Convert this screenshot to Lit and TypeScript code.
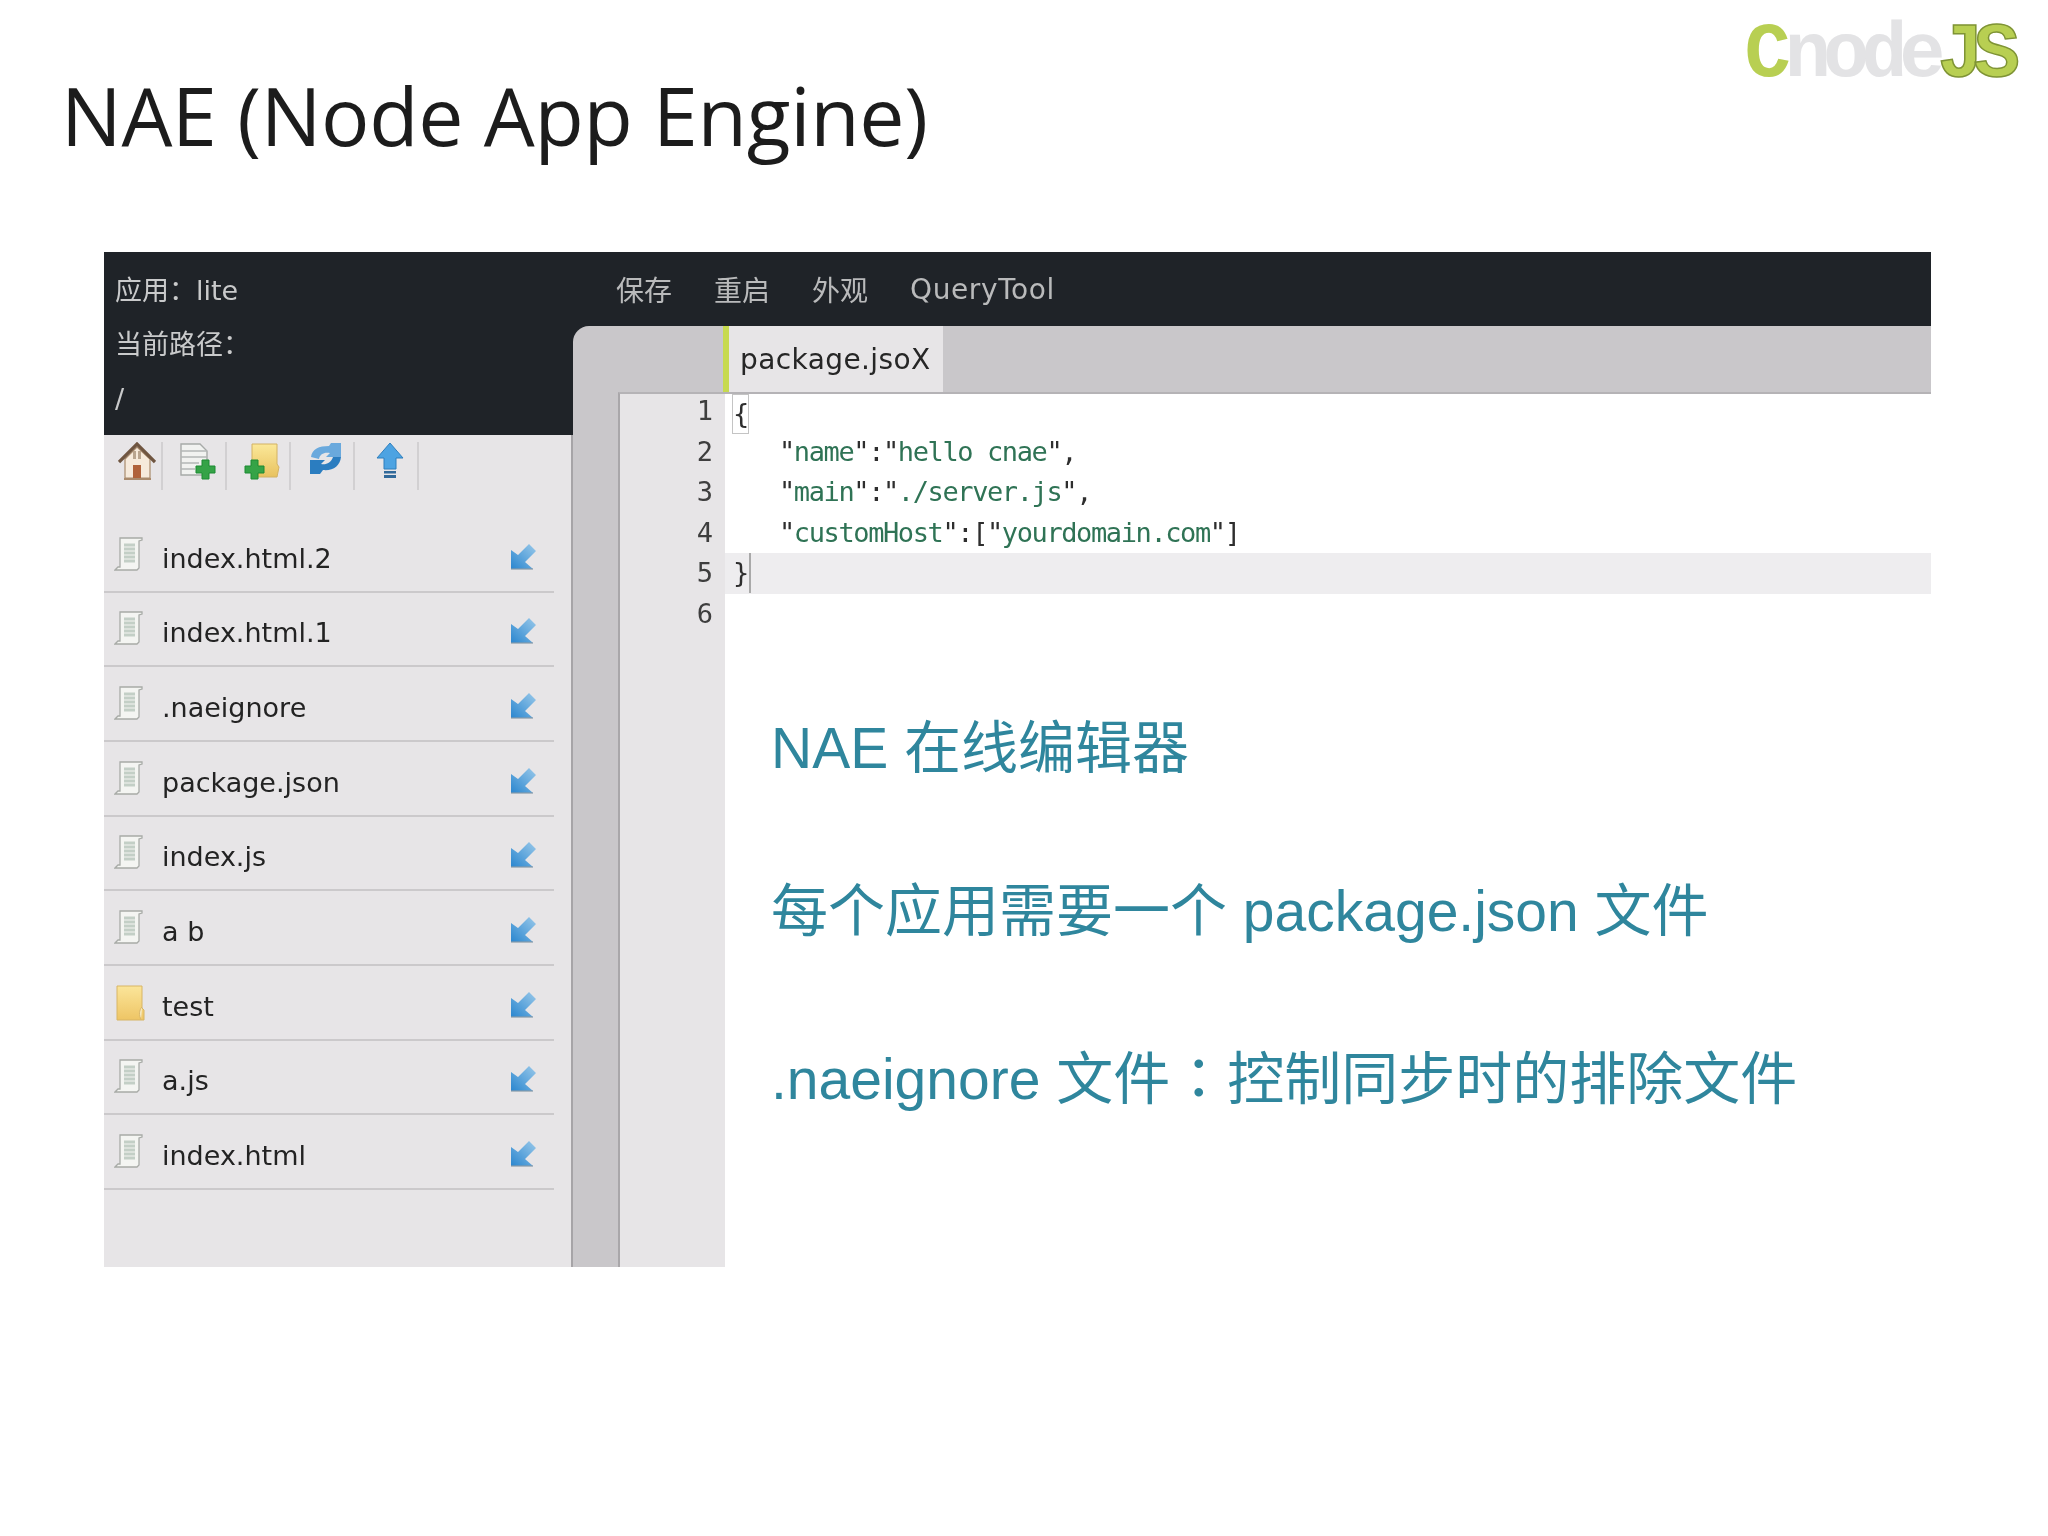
import { LitElement, html, css, svg } from "lit";
import { customElement } from "lit/decorators.js";

const files: [string, string][] = [
  ["index.html.2", "doc"],
  ["index.html.1", "doc"],
  [".naeignore", "doc"],
  ["package.json", "doc"],
  ["index.js", "doc"],
  ["a b", "doc"],
  ["test", "folder"],
  ["a.js", "doc"],
  ["index.html", "doc"],
];

const docIcon = svg`<svg class="fi" width="32" height="36" viewBox="0 0 32 36">
  <path d="M6 1h22v2l-3 1v27l-2 2H1l3-3h2z" fill="#f4f5f2" stroke="#a8aba7" stroke-width="1.3"/>
  <path d="M10 8h11M10 12h11M10 16h11M10 20h11M10 24h11" stroke="#c3cfc6" stroke-width="3"/>
</svg>`;

const folderIcon = svg`<svg class="fi" width="32" height="36" viewBox="0 0 32 36">
  <defs><linearGradient id="fg" x1="0" y1="0" x2="0" y2="1"><stop offset="0" stop-color="#fbe59a"/><stop offset="1" stop-color="#eec565"/></linearGradient></defs>
  <path d="M3 1h25v22l2 2v10H3z" fill="url(#fg)" stroke="#d8b565" stroke-width="1"/>
  <path d="M28 22c-3 3-3 8-1 13" fill="#f8eecb" stroke="#d8b565"/>
</svg>`;

const moveIcon = svg`<svg class="mv" width="28" height="28" viewBox="0 0 28 28">
  <defs><linearGradient id="mv" x1="0" y1="1" x2="1" y2="0"><stop offset="0" stop-color="#2a86cf"/><stop offset="1" stop-color="#9ac9ea"/></linearGradient></defs>
  <path d="M2 7l7 5L20 1l7 7-11 11 8 7H2z" fill="url(#mv)"/>
  <path d="M2 26h22" stroke="#8899a8" stroke-width="1.2"/>
</svg>`;

const homeIcon = svg`<svg width="38" height="38" viewBox="0 0 38 38">
  <path d="M7 17v19h25V17L19 5z" fill="#f6eadb" stroke="#a88a6c" stroke-width="1.2"/>
  <path d="M1 20 19 2l18 18" fill="none" stroke="#6f5540" stroke-width="3.2"/>
  <path d="M15 23h8v13h-8z" fill="#b0623a"/>
  <path d="M15 9h3v8h-3zM20 9h3v8h-3z" fill="#b9a58f"/>
  <path d="M6 37h27" stroke="#a98a6c" stroke-width="2"/>
</svg>`;

const newFileIcon = svg`<svg width="36" height="38" viewBox="0 0 36 38">
  <path d="M1 2h19l7 7v24H1z" fill="#f1f2f0" stroke="#a7aaa8" stroke-width="1.4"/>
  <path d="M1 9h26M1 15h26M1 21h18M1 27h14" stroke="#b3b7b5" stroke-width="1.6"/>
  <path d="M22 18h7v6h6v7h-6v6h-7v-6h-6v-7h6z" fill="#35a347" stroke="#1c8a32" stroke-width="1"/>
</svg>`;

const newFolderIcon = svg`<svg width="36" height="38" viewBox="0 0 36 38">
  <defs><linearGradient id="nf" x1="0" y1="0" x2="0" y2="1"><stop offset="0" stop-color="#fbe899"/><stop offset="1" stop-color="#e8c25f"/></linearGradient></defs>
  <path d="M8 2h25v20l2 3-2 10H8z" fill="url(#nf)" stroke="#d3b263"/>
  <path d="M7 18h7v6h6v7h-6v6H7v-6H1v-7h6z" fill="#35a347" stroke="#1c8a32" stroke-width="1"/>
</svg>`;

const refreshIcon = svg`<svg width="34" height="34" viewBox="0 0 34 34">
  <path d="M2 15C3 7 10 4 20 4l2-3h10v14H17l4-4c-6-1-10 1-11 6z" fill="#6aa9dd"/>
  <path d="M1 18h15l-4 4c5 1 10-1 12-7h8c-1 9-8 14-18 13l-3 4H1z" fill="#2b7dc0"/>
</svg>`;

const upIcon = svg`<svg width="28" height="38" viewBox="0 0 28 38">
  <path d="M14 1l13 15h-7v11H8V16H1z" fill="#4da3e2" stroke="#2f7fbd" stroke-width="1"/>
  <path d="M8 29h12v2.500H8zM8 33h12v3H8z" fill="#31699a"/>
</svg>`;

@customElement("app-root")
export class AppRoot extends LitElement {
  static styles = css`
    :host {
      display: block;
      width: 2048px;
      height: 1536px;
      background: #fff;
      overflow: hidden;
    }
    .head {
      height: 252px;
      display: flex;
      justify-content: space-between;
      align-items: flex-start;
      padding: 0 38px 0 61px;
      box-sizing: border-box;
    }
    h1 {
      margin: 75px 0 0;
      font: 400 80.6px/1 "Open Sans", sans-serif;
      color: #1c1c1c;
      letter-spacing: -0.3px;
    }
    .logo {
      margin-top: 17px;
      font: 700 77px/1 "Liberation Mono", monospace;
      letter-spacing: -8px;
      white-space: nowrap;
      filter: blur(0.7px);
    }
    .logo .c { color: #b8cf52; letter-spacing: -6px; }
    .logo .n { color: #e3e3e5; }
    .logo .j { color: #b8cf52; -webkit-text-stroke: 1.5px #7f9435; letter-spacing: -10px; }

    .panel {
      margin-left: 104px;
      width: 1827px;
      height: 1015px;
      display: grid;
      grid-template-columns: 469px 1fr;
      font-family: "DejaVu Sans", "Noto Sans CJK SC", sans-serif;
      filter: blur(0.45px);
    }
    .left { display: flex; flex-direction: column; min-height: 0; }
    .info {
      height: 183px;
      background: #1f2328;
      color: #c9cacb;
      font-size: 27px;
      box-sizing: border-box;
      padding: 12px 0 0 11px;
      line-height: 54px;
    }
    .info div { height: 54px; }
    .side {
      flex: 1;
      background: #e7e5e7;
      border-right: 2px solid #a6a4a7;
    }
    .tools {
      height: 83px;
      box-sizing: border-box;
      display: flex;
      padding-top: 7px;
    }
    .tool {
      height: 48px;
      width: 64px;
      box-sizing: border-box;
      border-right: 2px solid #d2d0d2;
      padding-left: 8px;
      display: flex;
      justify-content: center;
      align-items: flex-start;
    }
    .tool:first-child { width: 59px; }
    .tool svg { filter: blur(0.6px); }
    .row {
      width: 450px;
      height: 74.67px;
      box-sizing: border-box;
      border-bottom: 2px solid #cbc9cb;
      display: flex;
      align-items: center;
      padding: 0 17px 0 10px;
      font-size: 27px;
      color: #232323;
    }
    .row .name { flex: 1; margin-left: 16px; position: relative; top: 4px; }
    .fi { flex: none; margin-top: 1px; filter: blur(0.6px); }
    .mv { flex: none; margin-top: 5px; filter: blur(0.6px); }

    .right { display: flex; flex-direction: column; background: #1f2328; min-height: 0; }
    .menu {
      height: 74px;
      display: flex;
      align-items: center;
      color: #b9babb;
      font-size: 28px;
      padding: 0 0 0 43px;
      gap: 42px;
    }
    .menu .q { letter-spacing: 0.6px; }
    .main {
      flex: 1;
      min-height: 0;
      background: #c9c7ca;
      border-top-left-radius: 16px;
      display: flex;
      flex-direction: column;
    }
    .tabs { height: 66px; display: flex; padding-left: 150px; flex: none; }
    .tab {
      width: 220px;
      box-sizing: border-box;
      background: #e7e5e7;
      border-left: 6px solid #c7da4f;
      padding-left: 11px;
      font-size: 28px;
      line-height: 68px;
      letter-spacing: 0.4px;
      color: #262626;
      white-space: nowrap;
    }
    .editor {
      flex: 1;
      min-height: 0;
      margin-left: 45px;
      border-left: 2px solid #a9a7aa;
      border-top: 2px solid #b5b3b6;
      display: grid;
      grid-template-columns: 105px 1fr;
      background: #fff;
    }
    .gutter {
      background: #e7e5e7;
      font: 27px/40.6px "DejaVu Sans Mono", monospace;
      color: #3e3e3e;
      text-align: right;
      padding-right: 12px;
      box-sizing: border-box;
    }
    .gutter div { height: 40.6px; position: relative; top: -3px; }
    .code {
      background: #fff;
      min-width: 0;
      font: 27px/40.6px "DejaVu Sans Mono", monospace;
      letter-spacing: -1.4px;
      color: #2e2e2e;
    }
    .lines { margin-top: -3px; }
    .ln { height: 40.6px; padding-left: 8px; white-space: pre; }
    .ln.in { padding-left: 54px; }
    .s { color: #2f7355; }
    .brace {
      display: inline-block;
      outline: 1.5px solid #c4c4c4;
      height: 38px;
      line-height: 38px;
      margin-top: 4px;
      vertical-align: top;
    }
    .ln.active { background: #eeedef; }
    .caret { display: inline-block; width: 2px; height: 40px; background: #a9a9a9; vertical-align: top; margin-left: 1px; }
    .notes {
      display: flex;
      flex-direction: column;
      gap: 99px;
      margin-top: 81px;
      padding-left: 46px;
      font: 400 57px/64px "Liberation Sans", "Noto Sans CJK SC", sans-serif;
      letter-spacing: 0;
      color: #2f869d;
      white-space: nowrap;
    }
    .notes div { height: 64px; }
    .notes .colon { font-family: "Noto Sans CJK TC", sans-serif; }
  `;

  render() {
    const tools = [homeIcon, newFileIcon, newFolderIcon, refreshIcon, upIcon];
    return html`
      <div class="head">
        <h1>NAE (Node App Engine)</h1>
        <div class="logo"><span class="c">C</span><span class="n">node</span><span class="j">JS</span></div>
      </div>
      <div class="panel">
        <div class="left">
          <div class="info">
            <div>应用：lite</div>
            <div>当前路径：</div>
            <div>/</div>
          </div>
          <div class="side">
            <div class="tools">${tools.map((t) => html`<div class="tool">${t}</div>`)}</div>
            ${files.map(
              ([name, kind]) => html`<div class="row">
                ${kind === "folder" ? folderIcon : docIcon}
                <span class="name">${name}</span>
                ${moveIcon}
              </div>`
            )}
          </div>
        </div>
        <div class="right">
          <div class="menu"><span>保存</span><span>重启</span><span>外观</span><span class="q">QueryTool</span></div>
          <div class="main">
            <div class="tabs"><div class="tab">package.jsoX</div></div>
            <div class="editor">
              <div class="gutter">${[1, 2, 3, 4, 5, 6].map((n) => html`<div>${n}</div>`)}</div>
              <div class="code">
                <div class="lines">
                  <div class="ln"><span class="brace">{</span></div>
                  <div class="ln in">"<span class="s">name</span>":"<span class="s">hello cnae</span>",</div>
                  <div class="ln in">"<span class="s">main</span>":"<span class="s">./server.js</span>",</div>
                  <div class="ln in">"<span class="s">customHost</span>":["<span class="s">yourdomain.com</span>"]</div>
                  <div class="ln active">}<span class="caret"></span></div>
                  <div class="ln"></div>
                </div>
                <div class="notes">
                  <div>NAE 在线编辑器</div>
                  <div>每个应用需要一个 package.json 文件</div>
                  <div>.naeignore 文件<span class="colon">：</span>控制同步时的排除文件</div>
                </div>
              </div>
            </div>
          </div>
        </div>
      </div>
    `;
  }
}
